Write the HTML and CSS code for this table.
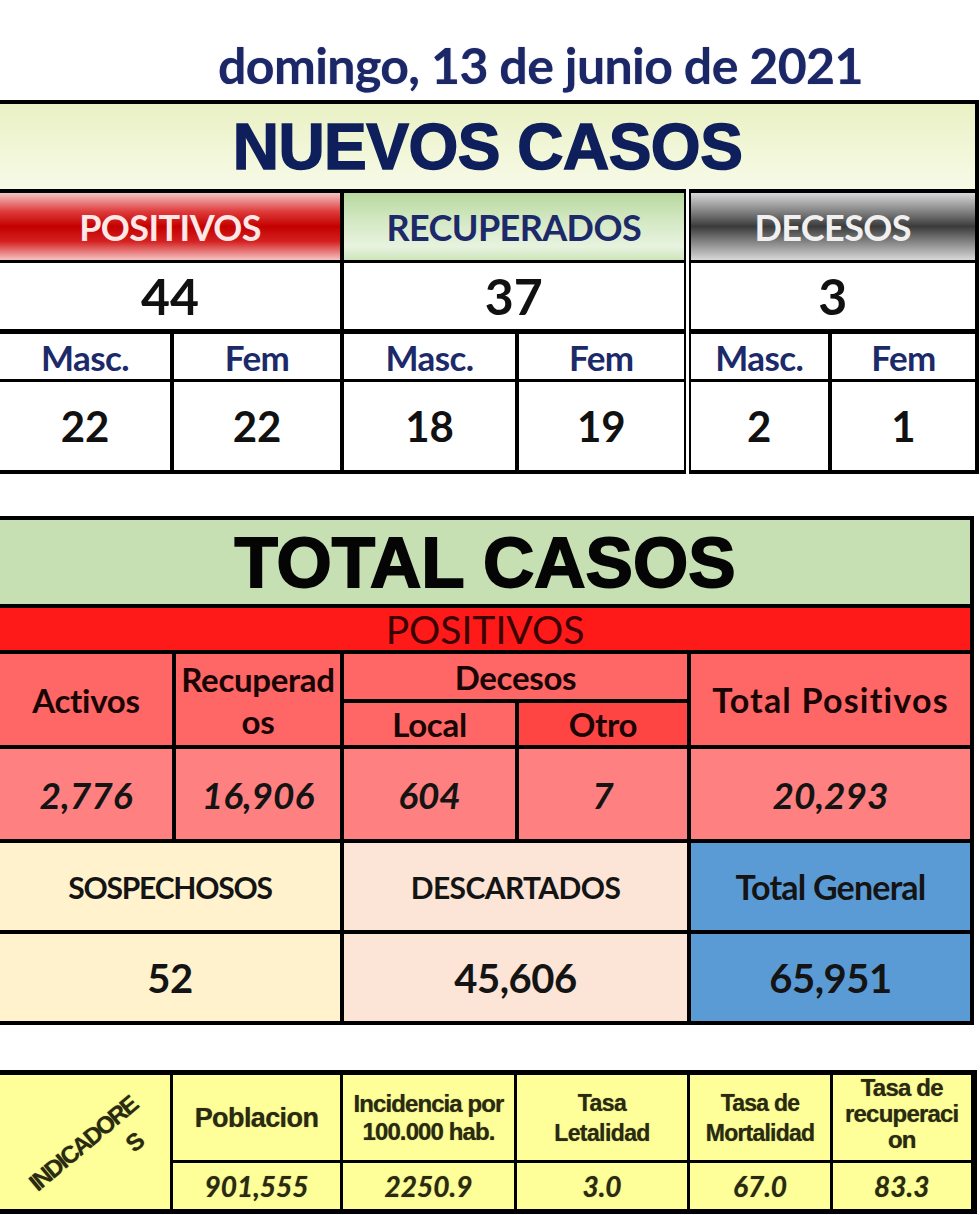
FILE: index.html
```html
<!DOCTYPE html>
<html lang="es">
<head>
<meta charset="utf-8">
<title>Casos</title>
<link rel="stylesheet" href="styles.css">
</head>
<body>
<div class="page">
  <div class="date">domingo, 13 de junio de 2021</div>

  <table class="tbl t1">
    <colgroup><col class="c174"><col class="c170"><col class="c175"><col class="c170"><col class="c143"><col class="c147"></colgroup>
    <tr class="r-title"><td colspan="6" class="title-nuevos">NUEVOS CASOS</td></tr>
    <tr class="r-head">
      <td colspan="2" class="h-pos">POSITIVOS</td>
      <td colspan="2" class="h-rec">RECUPERADOS</td>
      <td colspan="2" class="h-dec dbl">DECESOS</td>
    </tr>
    <tr class="r-tot">
      <td colspan="2">44</td>
      <td colspan="2">37</td>
      <td colspan="2" class="dbl">3</td>
    </tr>
    <tr class="r-sex">
      <td>Masc.</td><td>Fem</td>
      <td>Masc.</td><td>Fem</td>
      <td class="dbl">Masc.</td><td>Fem</td>
    </tr>
    <tr class="r-val">
      <td>22</td><td>22</td>
      <td>18</td><td>19</td>
      <td class="dbl">2</td><td>1</td>
    </tr>
  </table>

  <table class="tbl t2">
    <colgroup><col class="c176"><col class="c168"><col class="c175"><col class="c172"><col class="c283"></colgroup>
    <tr class="r-title2"><td colspan="5" class="title-total">TOTAL CASOS</td></tr>
    <tr class="r-pos"><td colspan="5" class="pos-band">POSITIVOS</td></tr>
    <tr class="r-h1">
      <td rowspan="2" class="hd">Activos</td>
      <td rowspan="2" class="hd hd-rec">Recuperad<br>os</td>
      <td colspan="2" class="hd hd-sub">Decesos</td>
      <td rowspan="2" class="hd hd-tp">Total Positivos</td>
    </tr>
    <tr class="r-h2">
      <td class="hd hd-sub">Local</td>
      <td class="hd hd-otro">Otro</td>
    </tr>
    <tr class="r-v">
      <td class="vv">2,776</td>
      <td class="vv">16,906</td>
      <td class="vv">604</td>
      <td class="vv">7</td>
      <td class="vv">20,293</td>
    </tr>
    <tr class="r-s">
      <td colspan="2" class="sosp">SOSPECHOSOS</td>
      <td colspan="2" class="desc desc-h">DESCARTADOS</td>
      <td class="gen gen-h">Total General</td>
    </tr>
    <tr class="r-sv">
      <td colspan="2" class="sosp num">52</td>
      <td colspan="2" class="desc num">45,606</td>
      <td class="gen num">65,951</td>
    </tr>
  </table>

  <table class="tbl t3">
    <colgroup><col class="c174"><col class="c170"><col class="c174"><col class="c173"><col class="c143"><col class="c142"></colgroup>
    <tr class="r-ih">
      <td rowspan="2" class="ind"><div class="ind-rot">INDICADORE<br><span class="ind-s">S</span></div></td>
      <td class="pob">Poblacion</td>
      <td class="inc">Incidencia por<br>100.000 hab.</td>
      <td class="let">Tasa<br>Letalidad</td>
      <td class="mor">Tasa de<br>Mortalidad</td>
      <td class="rec">Tasa de<br>recuperaci<br>on</td>
    </tr>
    <tr class="r-iv">
      <td>901,555</td>
      <td>2250.9</td>
      <td>3.0</td>
      <td>67.0</td>
      <td>83.3</td>
    </tr>
  </table>
</div>
</body>
</html>
```
FILE: styles.css
```css
html, body {
  margin: 0;
  padding: 0;
  background: #ffffff;
}
body {
  font-family: "Lato", "Open Sans", sans-serif;
  overflow: hidden;
}
.page {
  width: 980px;
  height: 1215px;
  overflow: hidden;
}
.date {
  padding: 40px 0 0 218px;
  height: 100px;
  box-sizing: border-box;
  font-family: "Lato", sans-serif;
  font-weight: 700;
  font-size: 50px;
  line-height: 50px;
  color: #1b2766;
  letter-spacing: -0.6px;
  text-shadow: 0 0 1px rgba(27,39,102,0.6);
  white-space: nowrap;
}
.tbl {
  border-collapse: collapse;
  table-layout: fixed;
  margin-left: -4px;
}
.tbl td {
  border: 4px solid #000;
  padding: 0;
  text-align: center;
  vertical-align: middle;
  overflow: hidden;
  white-space: nowrap;
}
.c142 { width: 142px; } .c143 { width: 143px; } .c147 { width: 147px; }
.c168 { width: 168px; } .c170 { width: 170px; } .c172 { width: 172px; }
.c173 { width: 173px; } .c174 { width: 174px; } .c175 { width: 175px; }
.c176 { width: 176px; } .c283 { width: 283px; }

/* Table 1 */
.t1 { width: 979px; }
.t1 td.dbl { border-left: 7px double #000; }
.r-title td { height: 85px; }
.title-nuevos {
  background: linear-gradient(to bottom, #e9f1c4 0%, #f2f7da 60%, #f7fae8 100%);
  font-family: "Liberation Sans", Arial, sans-serif;
  font-weight: 700;
  font-size: 64px;
  color: #0e1f5b;
  -webkit-text-stroke: 1.5px #0e1f5b;
  letter-spacing: -0.5px;
}
.r-head td {
  height: 67px;
  font-family: "Lato", sans-serif;
  font-weight: 700;
  font-size: 36px;
  letter-spacing: -0.6px;
  border-bottom-width: 3px;
}
.h-pos {
  background: linear-gradient(to bottom, #f6c3c3 0%, #de3a3a 28%, #c40000 50%, #d42020 72%, #f6c3c3 100%);
  color: #fde7e7;
}
.h-rec {
  background: linear-gradient(to bottom, #b7d89e 0%, #d3e8c3 40%, #e8f3df 80%, #cde5bb 100%);
  color: #1c2a6a;
}
.h-dec {
  background: linear-gradient(to bottom, #d8d8d8 0%, #8a8a8a 25%, #3a3a3a 50%, #8a8a8a 75%, #d8d8d8 100%);
  color: #f0f0f0;
}
.r-tot td {
  height: 66px;
  background: #fff;
  font-weight: 700;
  font-size: 50px;
  color: #111;
  border-top-width: 3px;
}
.r-sex td {
  height: 45px;
  background: #fff;
  font-weight: 700;
  font-size: 35px;
  color: #1c2a6a;
  letter-spacing: -0.6px;
  border-top-width: 5px;
  border-bottom-width: 3px;
}
.r-val td {
  height: 88px;
  background: #fff;
  font-weight: 700;
  font-size: 42px;
  color: #111;
  border-top-width: 3px;
}

/* Table 2 */
.t2 { width: 974px; margin-top: 42px; }
.r-title2 td { height: 84px; }
.title-total {
  background: #c6e0b4;
  font-family: "Liberation Sans", Arial, sans-serif;
  font-weight: 700;
  font-size: 71px;
  color: #050505;
  -webkit-text-stroke: 1.8px #050505;
}
.r-pos td { height: 42px; }
.pos-band {
  background: #ff1a1a;
  font-family: "Lato", sans-serif;
  font-weight: 400;
  font-size: 39px;
  line-height: 38px;
  color: #3b0000;
  vertical-align: top;
}
.hd {
  background: #ff6666;
  font-weight: 700;
  font-size: 33px;
  color: #1a0505;
  letter-spacing: -0.3px;
}
.hd-rec { line-height: 42px; vertical-align: top; }
.hd-tp { letter-spacing: 1.2px; font-size: 34px; }
.hd-otro { background: #ff4444; }
.r-h1 td { height: 45px; }
.r-h2 td { height: 42px; }
.r-v td { height: 90px; }
.vv {
  background: #ff8080;
  font-weight: 700;
  font-style: italic;
  font-size: 37px;
  color: #141414;
}
.r-s td, .r-sv td {
  font-weight: 700;
  color: #141414;
}
.r-s td {
  height: 87px;
  font-size: 30px;
  letter-spacing: -1.2px;
}
.r-sv td { height: 87px; }
.r-s td.desc-h { letter-spacing: -0.6px; }
.r-s td.gen-h { font-size: 34px; letter-spacing: -0.8px; }
.num {
  font-size: 40px;
  letter-spacing: -0.5px;
}
.sosp { background: #fff2cc; }
.desc { background: #fce4d6; }
.gen { background: #5b9bd5; }

/* Table 3 */
.t3 { width: 976px; margin-top: 45px; }
.t3 td {
  background: #ffff99;
  font-family: "Liberation Sans", Arial, sans-serif;
  font-weight: 700;
  color: #2a2a12;
  border-width: 3px;
  text-shadow: 0 0 1px rgba(40,40,0,0.6);
}
.t3 tr:first-child td { border-top-width: 5px; }
.t3 tr:last-child td, .t3 td.ind { border-bottom-width: 5px; }
.t3 td:last-child { border-right-width: 6px; }
.r-ih td {
  height: 85px;
  line-height: 28px;
  letter-spacing: -0.6px;
}
.r-ih td.pob { font-size: 27px; }
.r-ih td.inc { font-size: 24px; letter-spacing: -0.9px; }
.r-ih td.let { font-size: 23px; line-height: 30px; }
.r-ih td.mor { font-size: 23px; line-height: 30px; letter-spacing: -0.8px; }
.r-ih td.rec { font-size: 24px; line-height: 26px; vertical-align: top; letter-spacing: -0.8px; }
.r-ih td.rec { padding-top: 0; }
.r-iv td {
  height: 46px;
  font-family: "Lato", sans-serif;
  font-style: italic;
  font-size: 28px;
  letter-spacing: 0;
}
.t3 td.ind { padding: 28px 0 0 18px; }
.ind-rot {
  transform: rotate(-40deg);
  font-size: 24px;
  line-height: 32px;
  text-align: center;
  letter-spacing: -2px;
}
.ind-s { display: inline-block; padding-left: 80px; }
```
